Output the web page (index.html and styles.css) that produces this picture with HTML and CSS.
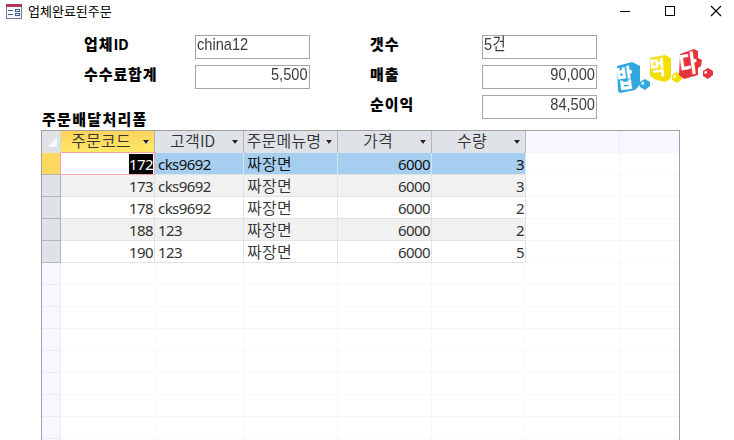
FILE: index.html
```
<!DOCTYPE html>
<html lang="ko">
<head>
<meta charset="utf-8">
<title>업체완료된주문</title>
<link rel="stylesheet" href="styles.css">
</head>
<body>
<header class="titlebar">
  <svg class="form-icon" width="16" height="15" viewBox="0 0 16 15" shape-rendering="crispEdges">
    <rect x=".5" y=".5" width="15" height="14" fill="#f4f6fb" stroke="#6b7b9d"/>
    <rect x="0" y="0" width="16" height="3" fill="#b5365b"/>
    <path d="M2 6.5h5M2 10.5h5" stroke="#445a8c"/>
    <path d="M9.500 5.500h4v2h-4zM9.500 9.500h4v2h-4z" fill="#fff" stroke="#445a8c"/>
  </svg>
  <span class="title">업체완료된주문</span>
  <svg class="controls" width="104" height="12" viewBox="0 0 104 12">
    <path d="M0 6.500h10" stroke="#000"/>
    <rect x="45.500" y="1.500" width="9" height="9" fill="none" stroke="#000"/>
    <path d="M91 1l10 10M101 1l-10 10" stroke="#000" stroke-width="1.100"/>
  </svg>
</header>
<main class="form">
  <section class="summary">
    <div class="fields fields-left">
      <label>업체<i>ID</i></label><div class="box"><span>china12</span></div>
      <label>수수료합계</label><div class="box right"><span>5,500</span></div>
    </div>
    <div class="fields fields-right">
      <label>갯수</label><div class="box"><span>5건</span></div>
      <label>매출</label><div class="box right"><span>90,000</span></div>
      <label>순이익</label><div class="box right"><span>84,500</span></div>
    </div>
    <svg class="logo" width="100" height="50" viewBox="0 0 100 50">
      <g class="blue">
        <path d="M2 19L17 15l8 4v19l-5 5-15 3-2-2z"/>
        <path d="M25 35l5-3 5 3v4l-5 4-5-3z"/>
        <text class="face" transform="translate(3.200 41.500) rotate(-8) scale(.62 .9)">밥</text>
        <path class="face" d="M26.500 35.500l2.500-.7v2.500l-2.500.7z"/>
      </g>
      <g class="yellow">
        <path d="M35 11l15-3 6 3v20l-5 4-10-2-6-4z"/>
        <path d="M57 28l5-3 5 3v4l-5 4-5-3z"/>
        <text class="face" transform="translate(35.800 28.500) rotate(-5) scale(.58 .72)">먹</text>
        <path class="face" d="M58.500 28.500l2.500-.7v2.500l-2.500.7z"/>
      </g>
      <g class="red">
        <path d="M65 7l14-5 4 2v7l4 2-1 6-3 2v7l-14 4-5-4z"/>
        <path d="M88 24l5-3 5 3v4l-5 4-5-3z"/>
        <text class="face" transform="translate(65.800 26.500) rotate(-8) scale(.68 .86)">다</text>
        <path class="face" d="M89.500 24.500l2.500-.7v2.500l-2.500.7z"/>
      </g>
    </svg>
  </section>
  <h2>주문배달처리폼</h2>
  <div class="sheet">
    <div class="row head">
      <div class="sel"><svg width="12" height="12"><path d="M11.500 0v11.500H0z" fill="#f6f9fd" stroke="#c9d6e4" stroke-width=".6"/></svg></div>
      <div class="active"><b>주문코드</b><s></s></div><div><b>고객<i>ID</i></b><s></s></div><div><b>주문메뉴명</b><s></s></div><div><b>가격</b><s></s></div><div><b>수량</b><s></s></div><div class="blank"></div><div class="blank"></div>
    </div>
    <div class="row data current"><div class="sel"></div><div class="n edit"><mark>172</mark></div><div>cks9692</div><div class="k">짜장면</div><div class="n">6000</div><div class="n">3</div><div class="blank"></div><div class="blank"></div></div>
    <div class="row data alt"><div class="sel"></div><div class="n">173</div><div>cks9692</div><div class="k">짜장면</div><div class="n">6000</div><div class="n">3</div><div class="blank"></div><div class="blank"></div></div>
    <div class="row data"><div class="sel"></div><div class="n">178</div><div>cks9692</div><div class="k">짜장면</div><div class="n">6000</div><div class="n">2</div><div class="blank"></div><div class="blank"></div></div>
    <div class="row data alt"><div class="sel"></div><div class="n">188</div><div>123</div><div class="k">짜장면</div><div class="n">6000</div><div class="n">2</div><div class="blank"></div><div class="blank"></div></div>
    <div class="row data"><div class="sel"></div><div class="n">190</div><div>123</div><div class="k">짜장면</div><div class="n">6000</div><div class="n">5</div><div class="blank"></div><div class="blank"></div></div>
    <div class="row empty"><div class="sel"></div><div></div><div></div><div></div><div></div><div></div><div></div><div></div></div>
    <div class="row empty"><div class="sel"></div><div></div><div></div><div></div><div></div><div></div><div></div><div></div></div>
    <div class="row empty"><div class="sel"></div><div></div><div></div><div></div><div></div><div></div><div></div><div></div></div>
    <div class="row empty"><div class="sel"></div><div></div><div></div><div></div><div></div><div></div><div></div><div></div></div>
    <div class="row empty"><div class="sel"></div><div></div><div></div><div></div><div></div><div></div><div></div><div></div></div>
    <div class="row empty"><div class="sel"></div><div></div><div></div><div></div><div></div><div></div><div></div><div></div></div>
    <div class="row empty"><div class="sel"></div><div></div><div></div><div></div><div></div><div></div><div></div><div></div></div>
    <div class="row empty"><div class="sel"></div><div></div><div></div><div></div><div></div><div></div><div></div><div></div></div>
    <div class="row empty"><div class="sel"></div><div></div><div></div><div></div><div></div><div></div><div></div><div></div></div>
  </div>
</main>
</body>
</html>
```
FILE: styles.css
```
* { box-sizing: border-box; }
body {
  margin: 0;
  height: 440px;
  overflow: hidden;
  background: #fff;
  color: #000;
  font-family: "Noto Sans", "Noto Sans CJK KR", sans-serif;
}
.titlebar {
  display: flex;
  align-items: center;
  height: 23px;
  padding-left: 6px;
}
.title {
  margin: -2px 0 0 6px;
  font: 13px/20px "Noto Sans CJK KR", sans-serif;
}
.controls { margin: -1px 10px 0 auto; }
.summary { display: flex; height: 88px; padding: 12px 0 0 84px; }
.fields {
  display: grid;
  grid-template-columns: 111px 115px;
  grid-auto-rows: 24px;
  row-gap: 6px;
  align-content: start;
}
.fields-right { margin-left: 61px; }
label, h2 {
  margin: 0;
  font: 900 15px/17px "Noto Sans CJK KR", sans-serif;
  letter-spacing: .9px;
  white-space: nowrap;
}
.fields-right label { margin-left: -1px; }
label i { font-style: normal; font-weight: 700; letter-spacing: -.3px; }
.box {
  height: 24px;
  border: 1px solid #a6a6a6;
  padding: 0 1px;
  color: #3c3c3c;
  font: 17px/18px "Liberation Sans", "Noto Sans CJK KR", sans-serif;
}
.box span { display: inline-block; transform: scaleX(.86); transform-origin: left; }
.box.right { text-align: right; }
.box.right span { transform-origin: right; }
.logo { overflow: visible; margin: 12px 0 0 18px; font: 900 28px "Noto Sans CJK KR", sans-serif; }
.blue { fill: #32a7df; }
.yellow { fill: #f2df00; }
.red { fill: #e6343e; }
.face { fill: #fff; }
h2 { height: 19px; margin-left: 42px; line-height: 16px; letter-spacing: 1.3px; }
.sheet {
  width: 639px;
  margin-left: 41px;
  border: 1px solid #a0a0a0;
  border-bottom: 0;
}
.row {
  display: grid;
  grid-template-columns: 19px 94px 89px 94px 94px 94px 94px 59px;
  grid-template-rows: 22px;
  height: 22px;
}
.row > div { border-right: 1px solid #e2e3e4; border-bottom: 1px solid #e2e3e4; }
.row > div:last-child { border-right: 0; }
.data > div {
  padding: 0 1px 0 3px;
  color: #333;
  font-size: 15px;
  line-height: 22px;
  letter-spacing: -.55px;
}
.data > .k { font: 350 16px/20px "Noto Sans CJK KR", sans-serif; letter-spacing: .3px; }
.data > .n { text-align: right; padding-right: 1px; }
.head > div {
  display: flex;
  align-items: center;
  background: #dfe2e6;
  border-right-color: #b2b6bc;
  border-bottom: 0;
  color: #333;
}
.head b {
  flex: 1;
  margin: -4px -1px 0 -3px;
  text-align: center;
  font: 350 16px/16px "Noto Sans CJK KR", sans-serif;
  letter-spacing: .2px;
  white-space: nowrap;
}
.head i { font-style: normal; letter-spacing: -.3px; }
.head s {
  flex: none;
  margin-right: 5px;
  border: 3.500px solid transparent;
  border-top: 4px solid #222;
  border-bottom: 0;
  filter: drop-shadow(0 1px 0 #fff);
}
.head > .active { background: linear-gradient(#ffd35c, #ffe968); }
.head > .sel { padding: 0 0 0 4px; border-right-color: #d4dae2; }
.data > .sel, .head > .sel { background: #dfe2e6; }
.data > .sel { border-color: #b2b6bc; }
.data .blank { border-color: #f7f7f8; }
.head > .blank { background: #f6f7ff; border-right-color: #ebecf2; }
.alt > div { background: #f1f1f1; }
.alt > .blank { background: #fff; }
.current > div { background: #a5cef0; color: #111; border-right-color: #d4e6f5; }
.current > .blank { background: #fff; }
.current > .sel { background: #ffd95f; }
.current > .edit { background: #fff; outline: 1px solid #f5a3a8; border-color: #f5a3a8; }
mark { display: inline-block; height: 20px; line-height: 21px; background: #000; color: #fff; }
.empty > div { border-color: #f7f7f8; }
.empty > .sel { background: #f6f7ff; border-color: #ebecf2; }
```
